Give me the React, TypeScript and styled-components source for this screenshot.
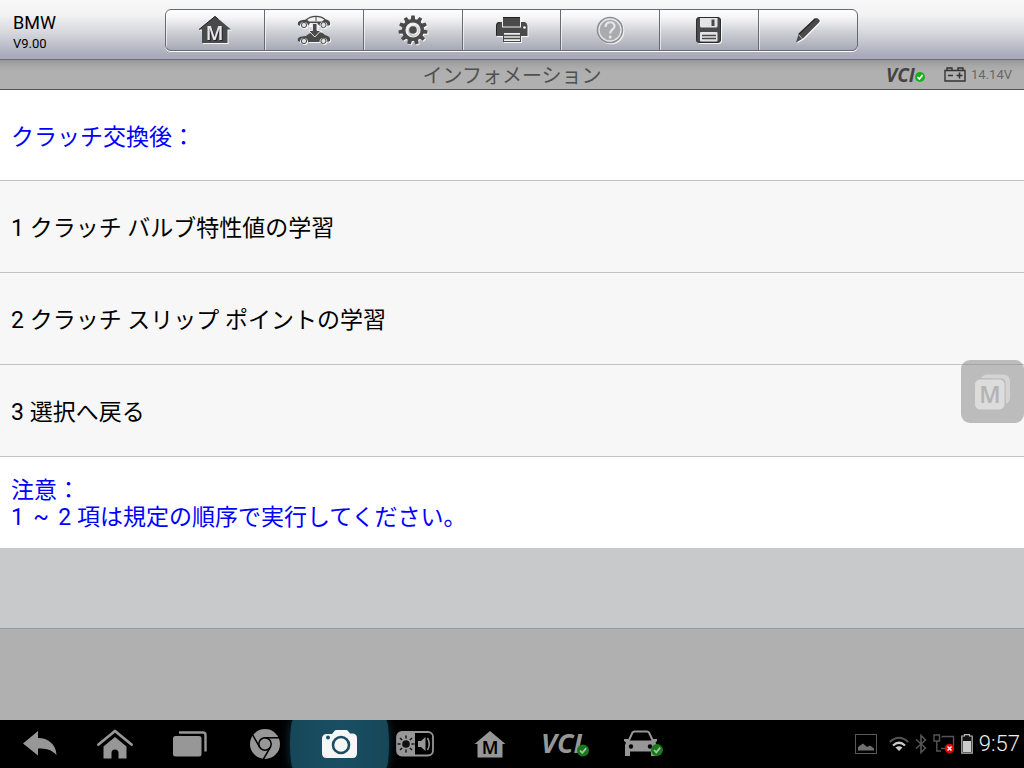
import React from 'react';
import styled, { createGlobalStyle, css } from 'styled-components';

const GlobalStyle = createGlobalStyle`
  * { box-sizing: border-box; }
  body { margin: 0; background: #b0b0b0; }
  body, button {
    font-family: Roboto, "Noto Sans CJK JP", sans-serif;
  }
  button { border: 0; padding: 0; margin: 0; background: none; color: inherit; cursor: pointer; }
  svg { display: block; }
`;

const Page = styled.div`
  position: relative;
  min-height: 100vh;
  display: flex;
  flex-direction: column;
`;

const Header = styled.header`
  display: grid;
  grid-template-columns: 1fr minmax(0, 693px) 1fr;
  height: 60px;
  padding-right: 1px;
  background: linear-gradient(#f8f8f8 0, #f3f3f4 14px, #d4d5db 34px, #a8aaba 56px);
  border-bottom: 1px solid #6a6a7c;
`;

const Brand = styled.div`
  padding: 13px 0 0 13px;
  color: #000;
`;

const Make = styled.h1`
  margin: 0;
  font-size: 18px;
  line-height: 20px;
  font-weight: 400;
`;

const Version = styled.div`
  font-size: 13px;
  line-height: 22px;
`;

const Toolbar = styled.nav`
  display: flex;
  height: 42px;
  margin-top: 9px;
  border: 1px solid #666a73;
  border-radius: 6px;
  overflow: hidden;
  background: linear-gradient(#fff 0, #f4f4f6 8px, #ced0d6 22px, #a6a8b5 40px);
  box-shadow: 0 1px 0 #fff;
`;

const ToolButton = styled.button`
  flex: 1;
  display: flex;
  align-items: center;
  justify-content: center;
  border-left: 1px solid #666a73;
  box-shadow: inset 1px 0 0 rgba(255, 255, 255, 0.6);

  &:first-child { border-left: 0; }
  svg { filter: drop-shadow(1px 1px 0 rgba(255, 255, 255, 0.85)); }
`;

const TitleBar = styled.div`
  display: grid;
  grid-template-columns: 1fr auto 1fr;
  align-items: center;
  height: 30px;
  border-bottom: 1px solid #555;
  background: linear-gradient(#979799 0, #a8a8a8 6px, #b0b0b0 12px);
`;

const Title = styled.h2`
  grid-column: 2;
  margin: 0;
  padding-top: 3px;
  font-size: 20px;
  line-height: 26px;
  font-weight: 400;
  color: #505050;
`;

const LinkStatus = styled.div`
  display: flex;
  align-items: center;
  justify-content: flex-end;
  gap: 18px;
  padding-right: 12px;
`;

const Voltage = styled.span`
  display: flex;
  align-items: center;
  gap: 5px;
  font-size: 13px;
  line-height: 20px;
  color: #666;
`;

const rowStyle = css`
  display: flex;
  align-items: center;
  width: 100%;
  min-height: 92px;
  padding: 4px 11px 0;
  font-size: 23px;
  line-height: 27px;
  text-align: left;
`;

const Note = styled.div<{ $divided?: boolean }>`
  ${rowStyle}
  min-height: 91px;
  padding-top: ${p => (p.$divided ? '4px' : '2px')};
  background: #fff;
  color: #00f;
  border-bottom: ${p => (p.$divided ? '1px solid #c2c2c2' : '0')};
`;

const Option = styled.button`
  ${rowStyle}
  background: #f7f7f7;
  color: #000;
  border-bottom: 1px solid #c2c2c2;
`;

const Tilde = styled.span`
  display: inline-block;
  width: 1em;
  text-align: center;
`;

const Actions = styled.div`
  height: 81px;
  background: #c8c9cb;
  border-bottom: 1px solid #999;
`;

const Filler = styled.div`
  flex: 1;
  background: #b0b0b0;
`;

const FloatingButton = styled.button`
  position: absolute;
  top: 360px;
  right: 0;
  width: 63px;
  height: 63px;
  display: flex;
  align-items: center;
  justify-content: center;
  border-radius: 9px;
  background: rgba(140, 140, 140, 0.55);
`;

const SystemBar = styled.footer`
  display: flex;
  justify-content: space-between;
  height: 48px;
  overflow: hidden;
  background: #000;
`;

const NavButtons = styled.nav`
  display: flex;
  padding-left: 2px;
`;

const NavButton = styled.button<{ $active?: boolean }>`
  position: relative;
  width: 75px;
  display: flex;
  align-items: center;
  justify-content: center;

  svg { position: relative; }

  ${p => p.$active && css`
    z-index: 1;
    &::before {
      content: '';
      position: absolute;
      inset: 0 -12px;
      border-radius: 3px / 24px;
      background: linear-gradient(90deg, #164759, #1a4f63 50%, #164759);
      box-shadow: 0 0 10px #0f3543;
    }
  `}
`;

const Tray = styled.div`
  display: flex;
  align-items: center;
  padding-right: 4px;
  gap: 6px;
`;

const Clock = styled.time`
  font-size: 22px;
  line-height: 28px;
  font-weight: 300;
  color: #eee;
`;

const Check = ({ cx, cy, r, fill, tick }: { cx: number; cy: number; r: number; fill: string; tick: string }) => (
  <g>
    <circle cx={cx} cy={cy} r={r} fill={fill} />
    <path
      d={`M${cx - r * 0.5} ${cy} l${r * 0.38} ${r * 0.4} l${r * 0.65} ${-r * 0.8}`}
      fill="none" stroke={tick} strokeWidth="1.8"
    />
  </g>
);

const dark = '#4a4a4a';

const HomeM = () => (
  <svg width="34" height="36" viewBox="0 -4 34 36">
    <path d="M17 0 L33 13.500 H29.500 V27 H4 V13.500 H1 Z" fill={dark} />
    <path d="M1 13.500 L17 .5 L20 3" fill="none" stroke="#222" strokeWidth="1" />
    <text x="17.500" y="25" textAnchor="middle" fontFamily="Noto Sans" fontWeight="600" fontSize="19" fill="#222">M</text>
    <text x="16.500" y="24" textAnchor="middle" fontFamily="Noto Sans" fontWeight="600" fontSize="19" fill="#e6e6ec">M</text>
  </svg>
);

const fenders = 'M1 10 C0 6 3 5 10 4.500 L12 6.500 H25 L28 4 C32 5 34 7 33 10 L30.500 11 A4 4 0 0 0 22.500 11 L20 8 H13 L11 11 A4 4 0 0 0 3 11 Z';
const sedan = 'M1 10 C0 6 3 5.500 9 5 C14 0 23 -1 28 4 C32 5 34 7 33 10 L30.500 11 A4 4 0 0 0 22.500 11 H11 A4 4 0 0 0 3 11 Z';

const Wheels = ({ cy }: { cy: number }) => (
  <g fill="#e4e4e6" stroke={dark} strokeWidth="1">
    <circle cx="7" cy={cy} r="2.600" />
    <circle cx="26.500" cy={cy} r="2.600" />
  </g>
);

const SwapCar = () => (
  <svg width="34" height="30" viewBox="0 0 34 30">
    <path d={sedan} fill="#f2f2f2" />
    <path d={fenders} fill={dark} />
    <path d="M9 5 C14 .5 23 0 28 4.500" fill="none" stroke={dark} strokeWidth="1.200" />
    <path d="M19 1.500 V6" stroke={dark} strokeWidth="1" />
    <g transform="translate(0 16)">
      <path d={sedan} fill={dark} />
    </g>
    <Wheels cy={10} />
    <Wheels cy={26} />
    <path d="M15.500 8.500 H20 V15.500 H24 L17.800 22 L11.500 15.500 H15.500 Z" fill={dark} stroke="#e8e8ea" strokeWidth="1" />
  </svg>
);

const Gear = () => (
  <svg width="30" height="30" viewBox="-15 -15 30 30">
    {Array.from({ length: 11 }, (_, i) => (
      <path key={i} d="M-2.200 -9.500 L-1.700 -14.500 H1.700 L2.200 -9.500 Z" fill={dark} transform={`rotate(${i * 360 / 11})`} />
    ))}
    <circle r="9" fill="none" stroke={dark} strokeWidth="4" />
    <circle r="7" fill="none" stroke="#eee" strokeWidth="1.200" />
    <circle r="3.800" fill={dark} />
  </svg>
);

const Printer = () => (
  <svg width="34" height="26" viewBox="0 0 34 26">
    <path d="M4 5 H29 Q32 5 32.500 9 V19 H1 V9 Q1 5 4 5 Z" fill={dark} />
    <path d="M1.500 18 V9 Q1.500 5.500 5 5.500" fill="none" stroke="#222" />
    <rect x="7.500" y="0" width="18" height="10" fill={dark} stroke="#eee" />
    <path d="M8 .5 H25" stroke="#222" />
    <rect x="8.500" y="15.500" width="17" height="9" fill="#eee" stroke={dark} />
    <path d="M9 18.500 H25 M9 21.500 H25" stroke={dark} strokeWidth="1.500" />
    <circle cx="29.500" cy="10.500" r="1.300" fill="#fff" />
  </svg>
);

const Help = () => (
  <svg width="28" height="28" viewBox="0 0 28 28">
    <circle cx="14" cy="14" r="12.500" fill="#aaabae" stroke="#8f9094" strokeWidth="1.600" />
    <circle cx="14" cy="14" r="11" fill="none" stroke="#e6e6e8" strokeWidth="1.300" />
    <path d="M9.500 11 C9.500 4.500 19 5 18.500 10.500 C18.200 13.500 14.200 13.500 14.200 17.500" fill="none" stroke="#e6e6e8" strokeWidth="2.200" />
    <circle cx="14.200" cy="21" r="1.500" fill="#e6e6e8" />
  </svg>
);

const Floppy = () => (
  <svg width="26" height="26" viewBox="0 0 26 26">
    <rect x=".5" y=".5" width="24" height="25" rx="2.500" fill={dark} stroke="#2d2d2d" />
    <path d="M4 1 H21.500 V9 Q21.500 10.500 20 10.500 H5.500 Q4 10.500 4 9 Z" fill="#e4e4e8" />
    <rect x="15.500" y="2.500" width="3" height="6.500" fill={dark} />
    <rect x="4" y="15" width="17.500" height="9.500" rx="1" fill="#e4e4e8" />
    <path d="M6 18.500 H20 M6 21.500 H20" stroke={dark} strokeWidth="1.500" />
  </svg>
);

const Pencil = () => (
  <svg width="26" height="26" viewBox="0 0 26 26">
    <path d="M20.500 1.500 Q22 0 24 2.500 Q25.500 4 24 5.500 L8 21.500 L1 25.500 L3.500 17.500 Z" fill={dark} />
    <path d="M3.500 17.500 L20.500 1.500" stroke="#222" strokeWidth="1.200" />
    <path d="M3.500 17.500 L7.500 22" stroke="#ccc" strokeWidth="1" />
  </svg>
);

const VciBadge = () => (
  <svg width="40" height="28" viewBox="0 0 40 28" role="img" aria-label="VCI">
    <text x="0" y="21" fontFamily="Open Sans" fontStyle="italic" fontWeight="700" fontSize="19" fill="#444">VCI</text>
    <Check cx={34} cy={16} r={5} fill="#16b01a" tick="#fff" />
  </svg>
);

const CarBattery = () => (
  <svg width="22" height="15" viewBox="0 0 22 15" fill="none" stroke="#333" strokeWidth="1.400">
    <path d="M1 3.500 H21 V14 H1 Z M3 3.500 V1 H8 V3.500 M14 3.500 V1 H19 V3.500" />
    <path d="M4 8.500 H9 M12.500 8.500 H18.500 M15.500 5.500 V11.500" strokeWidth="1.600" />
  </svg>
);

const Stack = () => (
  <svg width="36" height="36" viewBox="0 0 36 36">
    <path d="M6 4 Q8 .5 12 .5 H28 Q35 .5 35 7.500 V23 Q35 28 31 30 L30.500 8 Q30 5 27 4.500 Z" fill="#d4d4d4" />
    <rect x="0" y="5.500" width="29.500" height="30" rx="5" fill="#dcdcdc" />
    <text x="15" y="29" textAnchor="middle" fontFamily="Noto Sans" fontWeight="600" fontSize="23" fill="#b4b4b4">M</text>
  </svg>
);

const navGray = '#979797';

const Back = () => (
  <svg width="34" height="26" viewBox="0 0 34 26">
    <path d="M0 12.500 L15 0 V7 C25 7 33 13 33.500 24 C28 18 22 17.500 15 17.500 V24.500 Z" fill={navGray} />
  </svg>
);

const Home = () => (
  <svg width="36" height="30" viewBox="0 0 36 30">
    <path d="M1.500 15.500 L18 2 L34.500 15.500" fill="none" stroke={navGray} strokeWidth="2.800" strokeLinejoin="round" strokeLinecap="round" />
    <path d="M18 8 L29.500 17.500 V29.500 H21.500 V24 A3.500 3.500 0 0 0 14.500 24 V29.500 H6.500 V17.500 Z" fill={navGray} />
  </svg>
);

const Recent = () => (
  <svg width="34" height="26" viewBox="0 0 34 26">
    <rect x="0" y="5" width="28.500" height="20.500" rx="2.500" fill={navGray} />
    <path d="M6 1.500 H30 Q32.500 1.500 32.500 4 V20.500" fill="none" stroke={navGray} strokeWidth="2.400" />
  </svg>
);

const Chrome = () => (
  <svg width="30" height="30" viewBox="-15 -15 30 30">
    <circle r="15" fill={navGray} />
    <circle r="6.200" fill={navGray} stroke="#000" strokeWidth="1.500" />
    <g stroke="#000" strokeWidth="1.500">
      <path d="M0 -6.200 H14" />
      <path d="M0 -6.200 H14" transform="rotate(120)" />
      <path d="M0 -6.200 H14" transform="rotate(240)" />
    </g>
  </svg>
);

const Camera = () => (
  <svg width="36" height="28" viewBox="0 0 36 28">
    <path d="M5 4 H10 L12.500 1 Q13 0 14.500 0 H24 Q25.500 0 26 1 L28 3.500 H31 Q35 4 35 8 V23 Q35 28 30.500 28 H4.500 Q0 28 0 23 V9 Q0 4 5 4 Z" fill="#f6f6f6" />
    <circle cx="19" cy="15" r="8" fill="none" stroke="#1a4f63" strokeWidth="2.600" />
    <circle cx="6" cy="7.500" r="2" fill="#1a4f63" />
  </svg>
);

const Brightness = () => (
  <svg width="38" height="26" viewBox="0 0 38 26">
    <rect x="1" y="1" width="36" height="23.500" rx="5" fill="#000" stroke={navGray} strokeWidth="1.800" />
    <path d="M5 1 H19 V24.500 H5 Q1 24.500 1 20 V6 Q1 1 5 1 Z" fill={navGray} />
    <circle cx="10" cy="13" r="3.800" fill="#111" />
    <g stroke="#111" strokeWidth="1.400">
      {Array.from({ length: 8 }, (_, i) => (
        <path key={i} d="M10 7.500 V4.500" transform={`rotate(${i * 45} 10 13)`} />
      ))}
    </g>
    <path d="M22 10 H25 L29.500 6 V20 L25 16 H22 Z" fill={navGray} />
    <path d="M31.500 7 Q35 13 31.500 19" fill="none" stroke={navGray} strokeWidth="1.500" />
  </svg>
);

const NavHomeM = () => (
  <svg width="32" height="33" viewBox="0 -3 32 33">
    <path d="M16 0 L31.500 13 H28.500 V26.500 H3.500 V13 H.5 Z" fill={navGray} />
    <text x="16" y="23" textAnchor="middle" fontFamily="Noto Sans" fontWeight="600" fontSize="18" fill="#000">M</text>
  </svg>
);

const NavVci = () => (
  <svg width="50" height="40" viewBox="0 0 50 40" role="img" aria-label="VCI">
    <text x="1" y="29" fontFamily="Open Sans" fontStyle="italic" fontWeight="700" fontSize="27" fill={navGray}>VCI</text>
    <Check cx={43} cy={26.500} r={6} fill="#157a18" tick="#b5b5b5" />
  </svg>
);

const NavCar = () => (
  <svg width="48" height="28" viewBox="-8 0 48 28">
    <path d="M5 10 L8.500 2.500 Q9 1.500 10.500 1.500 H23 Q24.500 1.500 25 2.500 L28.500 10" fill="none" stroke={navGray} strokeWidth="2" />
    <path d="M0 9 H4 L6 10.500 H27 L29 9 H33 V11 L31.500 12.500 L32.500 15 V26 H27 V21.500 H6 V26 H1 V15 L2 12.500 L0 11 Z" fill={navGray} />
    <circle cx="7" cy="16.500" r="2.200" fill="#000" />
    <circle cx="26" cy="16.500" r="2.200" fill="#000" />
    <Check cx={33} cy={20} r={6} fill="#157a18" tick="#b5b5b5" />
  </svg>
);

const Picture = () => (
  <svg width="22" height="20" viewBox="0 0 22 20">
    <rect x=".5" y=".5" width="21" height="19" fill="none" stroke="#5a5a5a" />
    <path d="M3 16.500 V13 L8 9.500 L12 13 L15 11.500 L19 14.500 V16.500 Z" fill="#707070" />
  </svg>
);

const Wifi = () => (
  <svg width="20" height="16" viewBox="0 0 20 16" fill="none">
    <path d="M.8 6 Q10 -2.500 19.200 6" stroke="#555" strokeWidth="2" />
    <path d="M4 9.500 Q10 4 16 9.500" stroke="#ccc" strokeWidth="2.200" />
    <path d="M6.500 11.500 Q10 9 13.500 11.500 L10 15 Z" fill="#ccc" />
  </svg>
);

const Bluetooth = () => (
  <svg width="12" height="20" viewBox="0 0 12 20" fill="none" stroke="#555" strokeWidth="1.600">
    <path d="M1 5.500 L10.500 14 L6 18.500 V1.500 L10.500 6 L1 14.500" />
  </svg>
);

const Network = () => (
  <svg width="22" height="20" viewBox="0 0 22 20" fill="none" stroke="#555" strokeWidth="1.400">
    <path d="M1 1 H6.500 V7 H1 Z M3.800 7 V17 H8 M9 2.500 H20.500 V12 M9 2.500 V3.500 M8 14.500 H12" />
    <circle cx="16.500" cy="14.500" r="4.800" fill="#e60000" stroke="none" />
    <path d="M14.500 12.500 L18.500 16.500 M18.500 12.500 L14.500 16.500" stroke="#fff" strokeWidth="1.500" />
  </svg>
);

const Battery = () => (
  <svg width="12" height="20" viewBox="0 0 12 20">
    <path d="M3.500 2 V.7 H8.500 V2 H11.200 V19.200 H.8 V2 Z" fill="#111" stroke="#bbb" strokeWidth="1.200" />
    <rect x="2" y="7" width="8" height="11" fill="#ccc" />
  </svg>
);

const tools = [
  { label: 'Home', Icon: HomeM },
  { label: 'Change vehicle', Icon: SwapCar },
  { label: 'Settings', Icon: Gear },
  { label: 'Print', Icon: Printer },
  { label: 'Help', Icon: Help },
  { label: 'Save', Icon: Floppy },
  { label: 'Edit', Icon: Pencil },
];

const navItems = [
  { label: 'Back', Icon: Back },
  { label: 'Launcher', Icon: Home },
  { label: 'Recent apps', Icon: Recent },
  { label: 'Browser', Icon: Chrome },
  { label: 'Camera', Icon: Camera, active: true },
  { label: 'Display and sound', Icon: Brightness },
  { label: 'Home', Icon: NavHomeM },
  { label: 'VCI', Icon: NavVci },
  { label: 'Vehicle', Icon: NavCar },
];

const options = [
  '1 クラッチ バルブ特性値の学習',
  '2 クラッチ スリップ ポイントの学習',
  '3 選択へ戻る',
];

export default function App() {
  return (
    <Page lang="ja">
      <GlobalStyle />
      <Header>
        <Brand>
          <Make>BMW</Make>
          <Version>V9.00</Version>
        </Brand>
        <Toolbar>
          {tools.map(({ label, Icon }) => (
            <ToolButton key={label} type="button" aria-label={label}><Icon /></ToolButton>
          ))}
        </Toolbar>
      </Header>
      <TitleBar>
        <Title>インフォメーション</Title>
        <LinkStatus>
          <VciBadge />
          <Voltage><CarBattery />14.14V</Voltage>
        </LinkStatus>
      </TitleBar>
      <main>
        <Note $divided>クラッチ交換後：</Note>
        {options.map(text => <Option key={text} type="button">{text}</Option>)}
        <Note>
          <div>
            注意：<br />
            1 <Tilde>~</Tilde> 2 項は規定の順序で実行してください。
          </div>
        </Note>
        <Actions />
      </main>
      <Filler />
      <FloatingButton type="button" aria-label="Shortcuts"><Stack /></FloatingButton>
      <SystemBar>
        <NavButtons>
          {navItems.map(({ label, Icon, active }) => (
            <NavButton key={label} type="button" aria-label={label} $active={active}><Icon /></NavButton>
          ))}
        </NavButtons>
        <Tray>
          <Picture />
          <span />
          <Wifi />
          <Bluetooth />
          <Network />
          <Battery />
          <Clock>9:57</Clock>
        </Tray>
      </SystemBar>
    </Page>
  );
}
